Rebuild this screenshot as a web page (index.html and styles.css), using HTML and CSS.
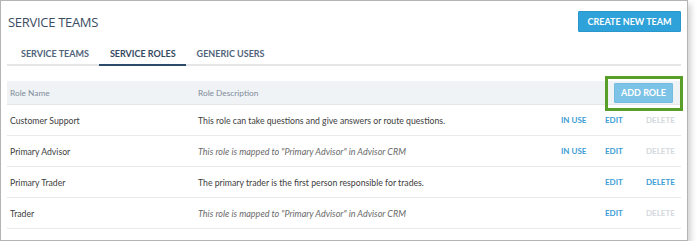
FILE: index.html
```html
<!DOCTYPE html>
<html>
<head>
<meta charset="utf-8">
<link rel="stylesheet" href="styles.css">
</head>
<body>
<div class="frame">
  <header class="top">
    <h1 class="title">SERVICE TEAMS</h1>
    <button class="btn btn-primary">CREATE NEW TEAM</button>
  </header>
  <nav class="tabs">
    <a class="tab">SERVICE TEAMS</a>
    <a class="tab active">SERVICE ROLES</a>
    <a class="tab">GENERIC USERS</a>
  </nav>
  <div class="roles">
    <div class="row head">
      <div class="cell name">Role Name</div>
      <div class="cell desc">Role Description</div>
      <div class="cell add"><button class="btn btn-light highlight">ADD ROLE</button></div>
    </div>
    <div class="row">
      <div class="cell name">Customer Support</div>
      <div class="cell desc">This role can take questions and give answers or route questions.</div>
      <div class="cell act">IN USE</div>
      <div class="cell act">EDIT</div>
      <div class="cell act off">DELETE</div>
    </div>
    <div class="row">
      <div class="cell name">Primary Advisor</div>
      <div class="cell desc em">This role is mapped to "Primary Advisor" in Advisor CRM</div>
      <div class="cell act">IN USE</div>
      <div class="cell act">EDIT</div>
      <div class="cell act off">DELETE</div>
    </div>
    <div class="row">
      <div class="cell name">Primary Trader</div>
      <div class="cell desc">The primary trader is the first person responsible for trades.</div>
      <div class="cell act"></div>
      <div class="cell act">EDIT</div>
      <div class="cell act">DELETE</div>
    </div>
    <div class="row">
      <div class="cell name">Trader</div>
      <div class="cell desc em">This role is mapped to "Primary Advisor" in Advisor CRM</div>
      <div class="cell act"></div>
      <div class="cell act">EDIT</div>
      <div class="cell act off">DELETE</div>
    </div>
  </div>
</div>
</body>
</html>
```

FILE: styles.css
```css
html, body {
  margin: 0;
  padding: 0;
  background: #fff;
}

.frame {
  box-sizing: border-box;
  width: 688px;
  height: 241px;
  border: 1px solid #b4b4b4;
  box-shadow: 3px 4px 6px rgba(0, 0, 0, 0.18);
  padding: 10px 6px 0 6px;
  background: #fff;
}

.top {
  display: flex;
  align-items: center;
  justify-content: space-between;
  height: 21px;
}

.title {
  margin: 0 0 0 1px;
  font-family: "Open Sans", sans-serif;
  font-weight: 400;
  font-size: 13px;
  color: #3b4d63;
  letter-spacing: -0.3px;
}

.btn {
  border: 0;
  border-radius: 1px;
  color: #fff;
  font-family: Lato, sans-serif;
  font-weight: 700;
  font-size: 9px;
  padding: 0;
  cursor: pointer;
}

.btn-primary {
  width: 103px;
  height: 21px;
  background: #2ea2d9;
  border: 1px solid #2a97cc;
}

.tabs {
  display: flex;
  margin-top: 10px;
  border-bottom: 2px solid #e4e6e8;
  padding-left: 3px;
}

.tab {
  font-family: Lato, sans-serif;
  font-weight: 700;
  font-size: 9px;
  line-height: 14px;
  color: #50637a;
  padding: 5px 10px 3px 11px;
  margin-bottom: -2px;
  border-bottom: 2px solid transparent;
}

.tab.active {
  border-bottom-color: #2c4a6c;
  color: #34495f;
}

.roles {
  margin-top: 15px;
  font-family: Lato, sans-serif;
  font-size: 8.7px;
  color: #404040;
}

.row {
  display: grid;
  grid-template-columns: 190px 1fr 44px 41px 35px;
  align-items: center;
  height: 31px;
  border-bottom: 1px solid #e8ebee;
  box-sizing: border-box;
}

.row.head {
  height: 24px;
  background: #f0f3f6;
  color: #7e8c9a;
  font-size: 8.3px;
  border-bottom-color: #e3e7ea;
}

.cell.name {
  padding-left: 3px;
}

.cell.desc {
  padding-left: 1px;
}

.cell.em {
  font-style: italic;
  font-size: 9px;
  color: #6a6a6a;
}

.cell.add {
  grid-column: 3 / 6;
  display: flex;
  justify-content: flex-end;
  padding-right: 8px;
}

.btn-light {
  width: 59px;
  height: 20px;
  background: #7dc3e7;
  border: 1px solid #74bbe0;
}

.highlight {
  position: relative;
}

.highlight::after {
  content: "";
  position: absolute;
  left: -10px;
  right: -11px;
  top: -8px;
  bottom: -9px;
  border: 3px solid #5a9e2a;
}

.cell.act {
  font-family: Lato, sans-serif;
  font-weight: 700;
  font-size: 8px;
  color: #3c9dd6;
}

.cell.act.off {
  color: #d3d8dc;
}
```
